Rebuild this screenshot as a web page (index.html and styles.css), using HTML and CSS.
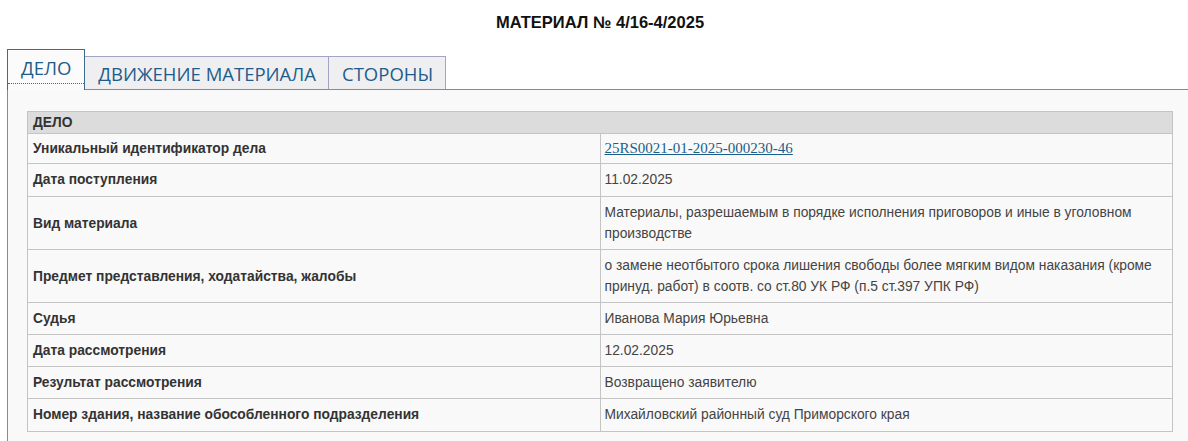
FILE: index.html
```html
<!DOCTYPE html>
<html lang="ru">
<head>
<meta charset="utf-8">
<title>Материал № 4/16-4/2025</title>
<link rel="stylesheet" href="styles.css">
</head>
<body>
<h1 class="title">МАТЕРИАЛ № 4/16-4/2025</h1>
<div class="tabs">
  <div class="tab tab-active"><span class="tab-label">ДЕЛО</span></div>
  <div class="tab">ДВИЖЕНИЕ МАТЕРИАЛА</div>
  <div class="tab">СТОРОНЫ</div>
</div>
<div class="panel">
  <table class="info">
    <tr><th colspan="2" class="head">ДЕЛО</th></tr>
    <tr><td class="label">Уникальный идентификатор дела</td><td class="value"><a class="uid" href="#">25RS0021-01-2025-000230-46</a></td></tr>
    <tr><td class="label">Дата поступления</td><td class="value">11.02.2025</td></tr>
    <tr><td class="label">Вид материала</td><td class="value">Материалы, разрешаемым в порядке исполнения приговоров и иные в уголовном производстве</td></tr>
    <tr><td class="label">Предмет представления, ходатайства, жалобы</td><td class="value">о замене неотбытого срока лишения свободы более мягким видом наказания (кроме принуд. работ) в соотв. со ст.80 УК РФ (п.5 ст.397 УПК РФ)</td></tr>
    <tr><td class="label">Судья</td><td class="value">Иванова Мария Юрьевна</td></tr>
    <tr><td class="label">Дата рассмотрения</td><td class="value">12.02.2025</td></tr>
    <tr><td class="label">Результат рассмотрения</td><td class="value">Возвращено заявителю</td></tr>
    <tr><td class="label">Номер здания, название обособленного подразделения</td><td class="value">Михайловский районный суд Приморского края</td></tr>
  </table>
</div>
</body>
</html>
```
FILE: styles.css
```css
html, body {
  margin: 0;
  padding: 0;
  background: #ffffff;
}
body {
  font-family: "Liberation Sans", Arial, sans-serif;
  color: #333;
  overflow: hidden;
}
.title {
  margin: 0;
  padding: 13px 0 0 12px;
  height: 36px;
  box-sizing: border-box;
  text-align: center;
  font-size: 16.5px;
  font-weight: bold;
  color: #111;
  line-height: 18px;
}
.tabs {
  display: flex;
  align-items: flex-end;
  padding-left: 7px;
  height: 53px;
  box-sizing: border-box;
}
.tab {
  height: 33px;
  box-sizing: border-box;
  padding: 0 12px 0 13px;
  border: 1px solid #a3a3c4;
  border-bottom: none;
  border-left: none;
  background: #efeff2;
  color: #1e5d8a;
  font-family: "Open Sans", "Noto Sans", sans-serif;
  font-size: 18.5px;
  font-weight: 500;
  line-height: 33px;
  white-space: nowrap;
}
.tab-active {
  position: relative;
  z-index: 1;
  height: 41px;
  margin-bottom: -1px;
  border: 1px solid #3f6b8c;
  border-bottom: none;
  background: #fbfbfb;
  padding: 3px 0 0 0;
  line-height: 30px;
}
.tab-label {
  display: block;
  padding: 0 13px 0 13px;
  border-bottom: 1px dotted #3f6b8c;
}
.panel {
  border-top: 1px solid #8a8a8a;
  border-left: 1px solid #8a8a8a;
  margin-left: 7px;
  background: #f9f9f9;
  padding: 21px 15px 20px 19px;
}
.info {
  width: 100%;
  border-collapse: collapse;
  border: 1px solid #b5b5b5;
  font-size: 13.8px;
  line-height: 21px;
}
.info th, .info td {
  border: 1px solid #c4c4c4;
  text-align: left;
  vertical-align: middle;
}
.head {
  background: #dcdcdc;
  font-weight: bold;
  color: #333;
  padding: 0 5px;
}
.label {
  width: 50%;
  font-weight: bold;
  color: #333;
  padding: 5px 5px;
}
.value {
  color: #444;
  padding: 5px 4px;
}
.info tr:nth-child(2) td {
  padding-top: 4px;
  padding-bottom: 4px;
}
.info tr:nth-child(3) td,
.info tr:last-child td {
  padding-bottom: 6px;
}
.uid {
  font-family: "Liberation Serif", "Times New Roman", serif;
  font-size: 15px;
  color: #1a5f8c;
  text-decoration: underline;
}
```
